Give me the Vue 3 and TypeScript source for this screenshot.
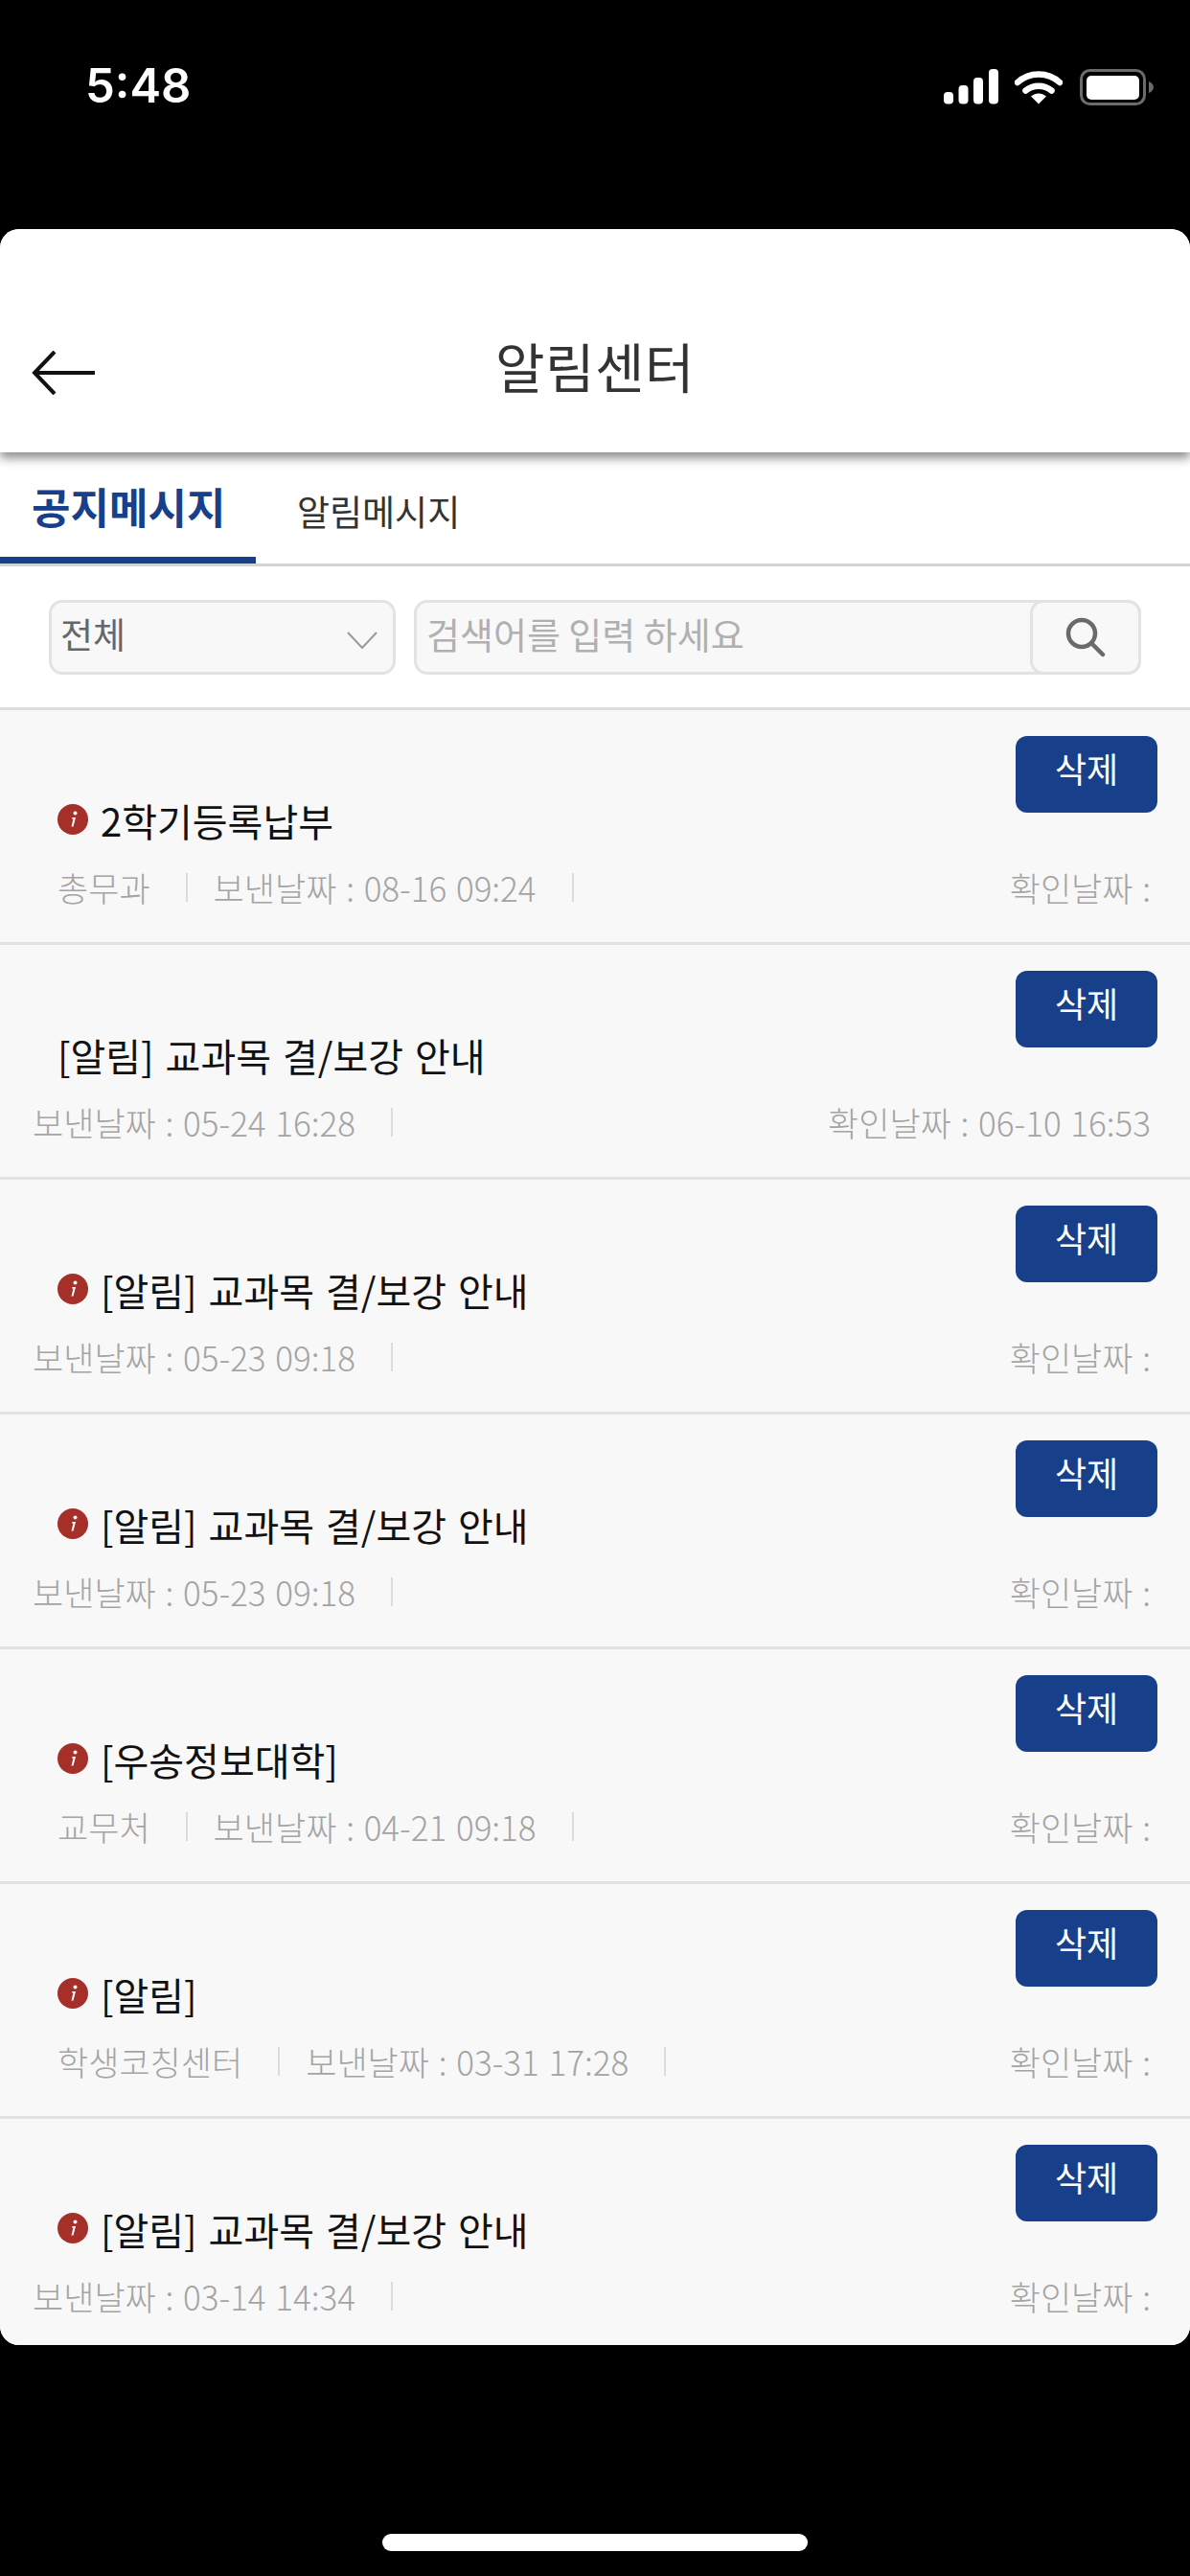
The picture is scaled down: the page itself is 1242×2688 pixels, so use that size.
<template>
  <div class="screen">
    <div class="status-bar">
      <span class="time">5:48</span>
      <div class="status-icons">
        <svg width="57" height="37" viewBox="0 0 57 37" fill="#fff">
          <rect x="0" y="24" width="10" height="12.500" rx="4" />
          <rect x="15.500" y="17" width="10" height="19.500" rx="4" />
          <rect x="31" y="9" width="10" height="27.500" rx="4" />
          <rect x="47" y="0" width="10" height="36.500" rx="4" />
        </svg>
        <svg width="50" height="37" viewBox="0 0 50 37" fill="none" stroke="#fff" class="wifi">
          <path d="M3 14C15 2.500 35 2.500 47 14" stroke-width="6.500" stroke-linecap="round" />
          <path d="M11.500 22.500C19 16 31 16 38.500 22.500" stroke-width="6.500" stroke-linecap="round" />
          <path d="M17 28.500C22 24.500 28 24.500 33 28.500L25 36.500Z" fill="#fff" stroke="none" />
        </svg>
        <svg width="78" height="38" viewBox="0 0 78 38" fill="none" class="battery">
          <rect x="1.500" y="1.500" width="66" height="35" rx="9" stroke="#6b6b6b" stroke-width="3" />
          <rect x="7" y="7" width="55" height="25" rx="5" fill="#fff" />
          <path d="M72 13C75 14 77 16.500 77 19C77 21.500 75 24 72 25Z" fill="#6b6b6b" />
        </svg>
      </div>
    </div>

    <div class="card">
      <header class="top-bar">
        <svg class="back" width="68" height="46" viewBox="0 0 68 46" fill="none" stroke="#111" stroke-width="4">
          <path d="M66 23H3" />
          <path d="M24 1L3 23L24 45" />
        </svg>
        <h1>알림센터</h1>
      </header>

      <nav class="tabs">
        <a
          v-for="tab in tabs"
          :key="tab.label"
          class="tab"
          :class="{ active: tab.active }"
        >{{ tab.label }}</a>
      </nav>

      <div class="filter">
        <div class="select">
          <span>전체</span>
          <svg width="32" height="18" viewBox="0 0 32 18" fill="none" stroke="#999" stroke-width="2">
            <path d="M1 1L16 17L31 1" />
          </svg>
        </div>
        <div class="search">
          <span class="placeholder">검색어를 입력 하세요</span>
          <div class="search-btn">
            <svg width="42" height="42" viewBox="0 0 42 42" fill="none" stroke="#6a6a6a" stroke-width="4.500">
              <circle cx="17" cy="17" r="14" />
              <path d="M27 27L39 39" stroke-linecap="round" />
            </svg>
          </div>
        </div>
      </div>

      <ul class="list">
        <li v-for="(item, i) in items" :key="i" class="row">
          <button class="del">삭제</button>
          <div class="title" :class="{ read: !item.unread }">
            <svg v-if="item.unread" class="info" width="32" height="32" viewBox="0 0 32 32">
              <circle cx="16" cy="16" r="16" fill="#a5302a" />
              <circle cx="18.500" cy="9.500" r="2" fill="#fff" />
              <path d="M15.500 14H19L16.500 23.500H14.500L16.500 15.500H15Z" fill="#fff" />
            </svg>
            <span>{{ item.title }}</span>
          </div>
          <div class="meta" :class="{ 'has-dept': item.dept }">
            <template v-if="item.dept">
              <span>{{ item.dept }}</span>
              <i class="sep"></i>
            </template>
            <span>보낸날짜 : {{ item.sent }}</span>
            <i class="sep"></i>
            <span class="checked">확인날짜 : {{ item.checked }}</span>
          </div>
        </li>
      </ul>
    </div>

    <div class="home-area">
      <div class="home-bar"></div>
    </div>
  </div>
</template>

<script setup lang="ts">
interface Notice {
  title: string
  dept?: string
  sent: string
  checked: string
  unread: boolean
}

const tabs = [
  { label: '공지메시지', active: true },
  { label: '알림메시지', active: false },
]

const items: Notice[] = [
  { title: '2학기등록납부', dept: '총무과', sent: '08-16 09:24', checked: '', unread: true },
  { title: '[알림] 교과목 결/보강 안내', sent: '05-24 16:28', checked: '06-10 16:53', unread: false },
  { title: '[알림] 교과목 결/보강 안내', sent: '05-23 09:18', checked: '', unread: true },
  { title: '[알림] 교과목 결/보강 안내', sent: '05-23 09:18', checked: '', unread: true },
  { title: '[우송정보대학]', dept: '교무처', sent: '04-21 09:18', checked: '', unread: true },
  { title: '[알림]', dept: '학생코칭센터', sent: '03-31 17:28', checked: '', unread: true },
  { title: '[알림] 교과목 결/보강 안내', sent: '03-14 14:34', checked: '', unread: true },
]
</script>

<style>
html,
body {
  margin: 0;
  background: #000;
}
</style>

<style scoped>
.screen {
  width: 1242px;
  height: 2688px;
  background: #000;
  display: flex;
  flex-direction: column;
  overflow: hidden;
  font-family: "Noto Sans CJK KR", "Noto Sans", sans-serif;
}

.status-bar {
  height: 239px;
  flex: none;
  display: flex;
  justify-content: space-between;
  align-items: flex-start;
  padding: 60px 37px 0 89px;
  box-sizing: border-box;
  color: #fff;
}

.time {
  font-family: Inter, sans-serif;
  font-size: 49px;
  font-weight: 600;
  line-height: 60px;
}

.status-icons {
  display: flex;
  align-items: flex-start;
  padding-top: 12px;
}

.wifi {
  margin-left: 17px;
}

.battery {
  margin-left: 18px;
}

.card {
  height: 2208px;
  flex: none;
  background: #fff;
  border-radius: 20px;
  overflow: hidden;
  display: flex;
  flex-direction: column;
}

.top-bar {
  height: 233px;
  flex: none;
  box-sizing: border-box;
  display: flex;
  align-items: center;
  justify-content: center;
  padding-top: 54px;
  background: #fff;
  box-shadow: 0 6px 10px rgba(0, 0, 0, 0.45);
  position: relative;
}

.back {
  position: absolute;
  left: 33px;
  top: 127px;
}

h1 {
  margin: -4px 0 0;
  font-size: 56px;
  font-weight: 400;
  letter-spacing: 0.5px;
  color: #333;
  line-height: 76px;
}

.tabs {
  height: 119px;
  flex: none;
  box-sizing: border-box;
  display: flex;
  border-bottom: 3px solid #d4d4d4;
}

.tab {
  box-sizing: border-box;
  height: 116px;
  display: flex;
  align-items: center;
  padding-top: 5px;
  font-size: 37px;
  color: #333;
  margin-left: 43px;
}

.tab.active {
  width: 267px;
  margin-left: 0;
  padding-left: 33px;
  padding-top: 3px;
  font-size: 44px;
  font-weight: 700;
  color: #183f8a;
  border-bottom: 7px solid #183f8a;
  white-space: nowrap;
}

.filter {
  height: 147px;
  flex: none;
  box-sizing: border-box;
  padding: 35px 51px 0;
  display: flex;
  gap: 19px;
  align-items: flex-start;
}

.select,
.search {
  height: 78px;
  box-sizing: border-box;
  background: #f8f8f8;
  border: 3px solid #e3e3e3;
  border-radius: 14px;
  display: flex;
  align-items: center;
}

.select {
  width: 362px;
  justify-content: space-between;
  padding: 0 16px 0 9px;
  font-size: 37px;
  color: #666;
}

.select span {
  margin-top: -9px;
}

.select svg {
  margin-top: 6px;
}

.search {
  flex: 1;
  justify-content: space-between;
  padding-left: 10px;
}

.placeholder {
  font-size: 38px;
  color: #b0b0b0;
  margin-top: -9px;
}

.search-btn {
  width: 116px;
  height: 78px;
  margin: -3px -3px -3px 0;
  box-sizing: border-box;
  border: 3px solid #e3e3e3;
  border-radius: 14px;
  display: flex;
  align-items: center;
  justify-content: center;
}

.list {
  list-style: none;
  margin: 0;
  padding: 0;
  flex: 1;
  background: #f8f8f8;
  border-top: 3px solid #dedede;
}

.row {
  height: 245px;
  box-sizing: border-box;
  border-bottom: 3px solid #e2e2e2;
  display: flex;
  flex-direction: column;
}

.del {
  align-self: flex-end;
  width: 148px;
  height: 80px;
  margin: 27px 34px 0 0;
  padding: 0 0 14px;
  flex: none;
  border: none;
  border-radius: 12px;
  background: #183f8a;
  color: #fff;
  font-family: inherit;
  font-size: 36px;
  line-height: 50px;
}

.title {
  height: 50px;
  margin-top: -17px;
  padding-left: 60px;
  display: flex;
  align-items: center;
  font-size: 40px;
  word-spacing: 3px;
  line-height: 50px;
  color: #111;
}

.info {
  margin-right: 13px;
  margin-top: -3px;
  flex: none;
}

.meta {
  display: flex;
  align-items: center;
  height: 44px;
  margin-top: 23px;
  padding: 0 41px 0 34px;
  font-size: 35px;
  word-spacing: 2px;
  line-height: 44px;
  font-weight: 300;
  color: #a4a4a4;
}

.meta.has-dept {
  padding-left: 60px;
}

.sep {
  display: block;
  width: 2px;
  height: 30px;
  background: #dcdcdc;
  margin: 0 27px 0 37px;
}

.checked {
  margin-left: auto;
}

.home-area {
  flex: 1;
  display: flex;
  justify-content: center;
  padding-top: 197px;
}

.home-bar {
  width: 444px;
  height: 18px;
  border-radius: 9px;
  background: #fff;
}
</style>
